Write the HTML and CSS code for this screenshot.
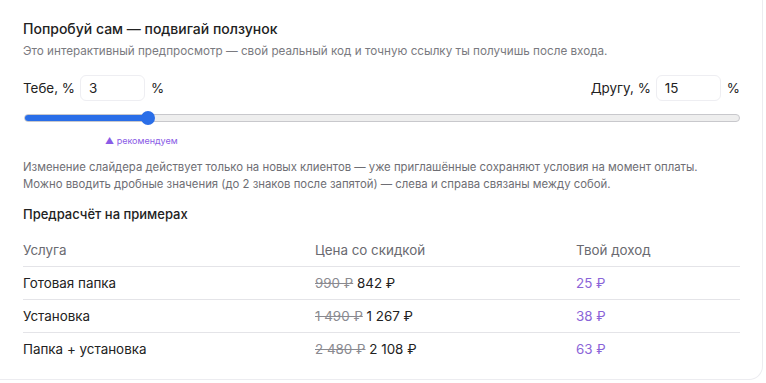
FILE: index.html
```html
<!DOCTYPE html>
<html lang="ru">
<head>
    <meta charset="UTF-8">
    <meta name="viewport" content="width=device-width, initial-scale=1.0">
    <title>Предпросмотр</title>
    <link rel="stylesheet" href="styles.css">
</head>
<body>

<div class="card">
    <h3 class="title">Попробуй сам — подвигай ползунок</h3>
    <p class="sub">Это интерактивный предпросмотр — свой реальный код и точную ссылку ты получишь после входа.</p>

    <div class="inputs">
        <div class="field">
            <label for="me">Тебе, %</label>
            <input type="text" id="me" value="3">
            <span>%</span>
        </div>
        <div class="field">
            <label for="friend">Другу, %</label>
            <input type="text" id="friend" value="15">
            <span>%</span>
        </div>
    </div>

    <div class="slider">
        <div class="fill" style="width: 17.2%"></div>
        <div class="thumb" style="left: 17.2%"></div>
    </div>
    <div class="hint">▲ рекомендуем</div>

    <p class="note">Изменение слайдера действует только на новых клиентов — уже приглашённые сохраняют условия на момент оплаты.<br>
    Можно вводить дробные значения (до 2 знаков после запятой) — слева и справа связаны между собой.</p>

    <h4 class="calc">Предрасчёт на примерах</h4>
    <table>
        <thead>
            <tr><th>Услуга</th><th>Цена со скидкой</th><th>Твой доход</th></tr>
        </thead>
        <tbody>
            <tr><td>Готовая папка</td><td><s>990 ₽</s> 842 ₽</td><td class="income">25 ₽</td></tr>
            <tr><td>Установка</td><td><s>1 490 ₽</s> 1 267 ₽</td><td class="income">38 ₽</td></tr>
            <tr><td>Папка + установка</td><td><s>2 480 ₽</s> 2 108 ₽</td><td class="income">63 ₽</td></tr>
        </tbody>
    </table>
</div>

</body>
</html>
```

FILE: styles.css
```css
body {
    margin: 0;
    background: #fff;
    font-family: Inter, "Noto Sans", sans-serif;
    color: #222;
}

.card {
    margin: -12px 3px 0 0;
    height: 392px;
    box-sizing: border-box;
    padding: 31px 22px 0 23px;
    border: 1px solid #ececf0;
    border-left: none;
    border-radius: 0 14px 14px 0;
}

.title {
    margin: 0;
    font-size: 14px;
    font-weight: 500;
    line-height: 18px;
}

.sub {
    margin: 6px 0 0;
    font-size: 11.7px;
    line-height: 15px;
    color: #7a7a80;
}

.inputs {
    display: flex;
    justify-content: space-between;
    margin-top: 16px;
}

.field {
    display: flex;
    align-items: center;
    gap: 5px;
    font-size: 13.4px;
}

.field span {
    margin-left: 1px;
}

.field input {
    width: 65px;
    height: 26px;
    box-sizing: border-box;
    padding: 0 8px;
    border: 1px solid #eeeef2;
    border-radius: 6px;
    font: inherit;
    color: #222;
}

.slider {
    position: relative;
    margin: 13px 0 0 1px;
    height: 6px;
    border: 1px solid #c8c8cc;
    border-radius: 4px;
    background: #eee;
}

.fill {
    height: 100%;
    background: #2a6ee8;
    border-radius: 4px;
}

.thumb {
    position: absolute;
    top: -4px;
    width: 14px;
    height: 14px;
    margin-left: -7px;
    border-radius: 50%;
    background: #2a6ee8;
}

.hint {
    margin: 13px 0 0 82px;
    font-size: 9px;
    color: #8a5ce6;
}

.note {
    margin: 13px 0 0;
    font-size: 11.35px;
    line-height: 17px;
    color: #6e6e74;
}

.calc {
    margin: 13px 0 0;
    font-size: 13px;
    font-weight: 500;
}

table {
    width: 100%;
    margin-top: 12px;
    border-collapse: collapse;
    font-size: 13.4px;
}

th {
    text-align: left;
    font-weight: 400;
    color: #6a6a70;
    padding: 8px 0;
}

td {
    padding: 8px 0;
    border-top: 1px solid #e4e4e8;
}

th:nth-child(1) { width: 292px; }
th:nth-child(2) { width: 261px; }

s {
    color: #8a8a90;
}

.income {
    color: #8a64d8;
}
```
